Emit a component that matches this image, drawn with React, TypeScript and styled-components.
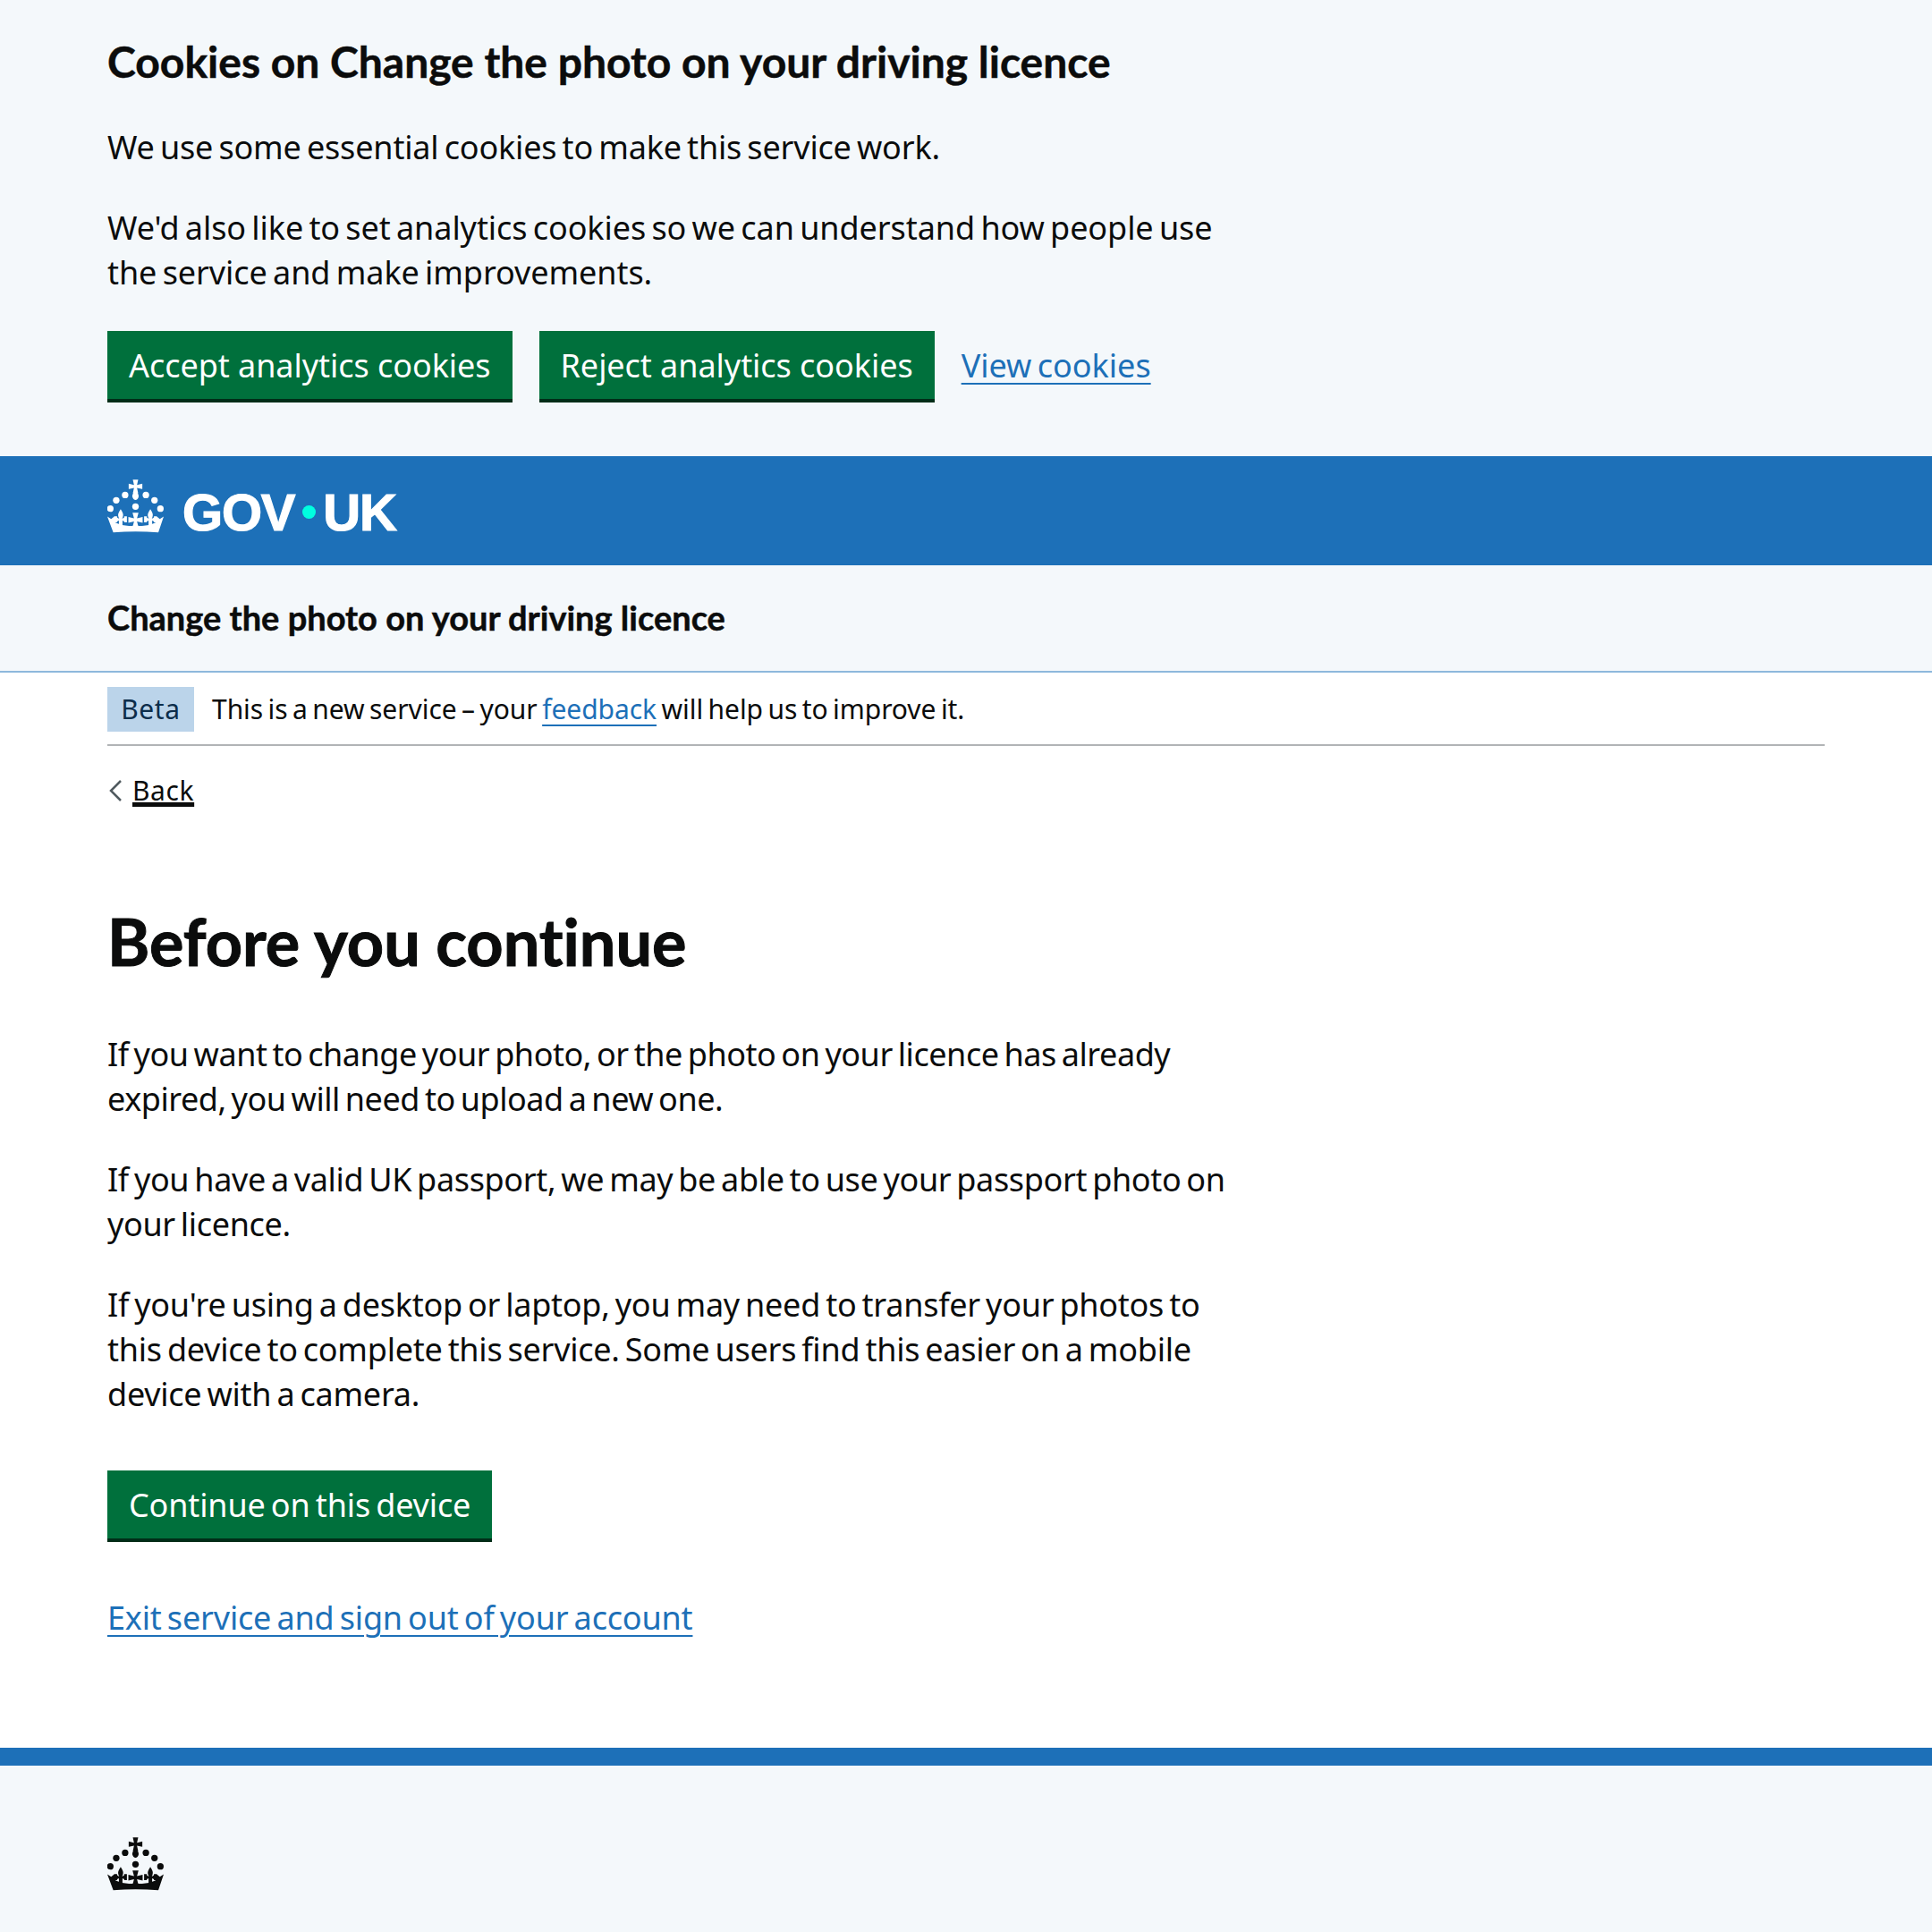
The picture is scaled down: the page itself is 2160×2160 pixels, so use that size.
import React from 'react';
import styled, { createGlobalStyle, css } from 'styled-components';

const GlobalStyle = createGlobalStyle`
  html, body {
    margin: 0;
    padding: 0;
    background: #fff;
    color: #0b0c0c;
    font-family: 'Noto Sans', sans-serif;
  }
  * { box-sizing: border-box; }
`;

// closest installed faces to the reference: tighter Noto for copy, Lato for headings
const bodyText = css`
  font-size: 36px;
  letter-spacing: -0.17px;
  word-spacing: -3px;
`;

const smallText = css`
  font-size: 30px;
  letter-spacing: -0.05px;
  word-spacing: -2.3px;
`;

const headingText = css`
  font-family: 'Lato', sans-serif;
  font-weight: 700;
  font-variant-ligatures: none;
  -webkit-text-stroke: 0.5px currentColor;
`;

const Page = styled.div`
  width: 2160px;
  height: 2160px;
  overflow: hidden;
  display: flex;
  flex-direction: column;
`;

const CookieBanner = styled.div`
  background: #f4f8fb;
  height: 510px;
  padding: 40px 120px 0;
`;

const CookieHeading = styled.h2`
  ${headingText}
  margin: 0 0 40px;
  font-size: 48px;
  line-height: 58px;
  padding-bottom: 2px;
`;

const Para = styled.p<{ $tracking?: number }>`
  ${bodyText}
  ${(p) => p.$tracking !== undefined && `letter-spacing: ${p.$tracking}px;`}
  margin: 0 0 40px;
  max-width: 1275px;
  line-height: 50px;
`;

const ButtonRow = styled.div`
  display: flex;
  align-items: center;
  gap: 30px;
`;

const GreenButton = styled.button`
  height: 76px;
  padding: 2px 24px 0;
  border: 0;
  background: #00703c;
  box-shadow: 0 4px 0 #002d18;
  color: #fff;
  font-family: inherit;
  font-size: 36px;
  letter-spacing: -0.05px;
  line-height: 38px;
`;

const ContinueButton = styled(GreenButton)`
  margin-top: 20px;
  letter-spacing: -0.15px;
  word-spacing: -3px;
`;

const Link = styled.a`
  ${bodyText}
  color: #1d70b8;
  line-height: 50px;
  text-decoration: underline;
  text-decoration-thickness: 2px;
  text-underline-offset: 6px;
`;

const ButtonLink = styled(Link)`
  padding-top: 2px;
  letter-spacing: 0;
`;

const Masthead = styled.header`
  background: #1d70b8;
  height: 122px;
  padding-left: 120px;
  display: flex;
  align-items: center;
  gap: 21px;
`;

const Wordmark = styled.div`
  display: flex;
  align-items: center;
  padding-top: 3px;
  color: #fff;
  font-family: 'Liberation Sans', sans-serif;
  font-size: 58px;
  line-height: 60px;
  font-weight: 700;
  letter-spacing: -1.2px;
  -webkit-text-stroke: 1.2px #fff;
`;

const WordmarkDot = styled.span`
  width: 15px;
  height: 15px;
  margin: 0 8px 0 9px;
  border-radius: 50%;
  background: #00ffe0;
`;

const ServiceBar = styled.div`
  ${headingText}
  background: #f4f8fb;
  height: 120px;
  padding: 0 0 2px 120px;
  border-bottom: 2px solid #8eb8dc;
  display: flex;
  align-items: center;
  font-size: 38px;
`;

const Main = styled.main`
  flex: 1;
  padding: 0 120px;
`;

const PhaseBanner = styled.div`
  ${smallText}
  display: flex;
  align-items: center;
  gap: 20px;
  height: 82px;
  padding: 16px 0 14px;
  border-bottom: 2px solid #b1b4b6;
  line-height: 40px;
`;

const PhaseTag = styled.strong`
  width: 97px;
  height: 50px;
  background: #bbd4ea;
  color: #0c2d4a;
  font-size: 30px;
  font-weight: 400;
  letter-spacing: 0.6px;
  line-height: 50px;
  text-align: center;
`;

const PhaseLink = styled(Link)`
  ${smallText}
  line-height: 40px;
`;

const BackLink = styled.a`
  display: flex;
  align-items: center;
  gap: 12px;
  margin-top: 30px;
  padding-left: 2px;
  height: 40px;
  color: #0b0c0c;
  font-size: 30px;
  letter-spacing: 0.6px;
  line-height: 40px;
`;

const BackText = styled.span`
  text-decoration: underline;
  text-decoration-thickness: 2px;
  text-underline-offset: 5px;
`;

const Title = styled.h1`
  ${headingText}
  margin: 108px 0 62px;
  font-size: 72px;
  line-height: 80px;
  -webkit-text-stroke: 1px currentColor;
`;

const ExitLink = styled.div`
  margin-top: 64px;
`;

const Footer = styled.footer`
  height: 206px;
  background: #f4f8fb;
  border-top: 20px solid #1d70b8;
  padding: 80px 120px 0;
`;

const CrownSvg = styled.svg<{ $raised?: boolean }>`
  display: block;
  flex: none;
  margin-top: ${(p) => (p.$raised ? '-10px' : '0')};
`;

const pattee = (cx: number, cy: number, l: number, end: number, mid: number) =>
  `M${cx - end} ${cy - l}H${cx + end}L${cx + mid} ${cy - mid}L${cx + l} ${cy - end}V${cy + end}L${cx + mid} ${cy + mid}L${cx + end} ${cy + l}H${cx - end}L${cx - mid} ${cy + mid}L${cx - l} ${cy + end}V${cy - end}L${cx - mid} ${cy - mid}Z`;

const fleur = (cx: number) =>
  `M${cx} 100C${cx + 6} 110 ${cx + 11} 117 ${cx + 7} 127L${cx + 5} 132L${cx + 12} 128V124H${cx + 21}V144H${cx + 12}V141L${cx + 6} 138V165H${cx - 6}V138L${cx - 12} 141V144H${cx - 21}V124H${cx - 12}V128L${cx - 5} 132L${cx - 7} 127C${cx - 11} 117 ${cx - 6} 110 ${cx} 100Z`;

const Crown = ({ color, raised }: { color: string; raised?: boolean }) => (
  <CrownSvg $raised={raised} width="63" height="60" viewBox="0 0 190 180" fill={color} aria-hidden="true">
    <path d={pattee(95, 23, 23, 9, 5)} />
    <path d="M95 34C101 43 108 52 105 60C103 66 99 69 95 69C91 69 87 66 85 60C82 52 89 43 95 34Z" />
    <circle cx="60" cy="52" r="11" />
    <circle cx="130" cy="52" r="11" />
    <circle cx="30" cy="70" r="11" />
    <circle cx="159" cy="70" r="11" />
    <circle cx="10" cy="98" r="11" />
    <circle cx="179" cy="98" r="11" />
    <circle cx="95" cy="91" r="11" />
    <path d="M0 125L13 133L25 123L28 146Q62 162 95 154Q128 162 162 146L165 123L177 133L190 125L172 178Q95 172 20 178Z" />
    <path d={fleur(45)} />
    <path d={fleur(145)} />
    <path d={pattee(95, 136, 24, 10, 5)} />
  </CrownSvg>
);

const BackChevron = () => (
  <svg width="14" height="24" viewBox="0 0 14 24" fill="none" stroke="#505a5f" strokeWidth="2.5" aria-hidden="true">
    <path d="M13 1L2 12l11 11" />
  </svg>
);

const App = () => {
  return (
    <Page>
      <GlobalStyle />
      <CookieBanner>
        <CookieHeading>Cookies on Change the photo on your driving licence</CookieHeading>
        <Para>We use some essential cookies to make this service work.</Para>
        <Para $tracking={-0.07}>
          We'd also like to set analytics cookies so we can understand how people use the service and
          make improvements.
        </Para>
        <ButtonRow>
          <GreenButton>Accept analytics cookies</GreenButton>
          <GreenButton>Reject analytics cookies</GreenButton>
          <ButtonLink href="#">View cookies</ButtonLink>
        </ButtonRow>
      </CookieBanner>
      <Masthead>
        <Crown color="#fff" raised />
        <Wordmark>
          GOV
          <WordmarkDot />
          UK
        </Wordmark>
      </Masthead>
      <ServiceBar>Change the photo on your driving licence</ServiceBar>
      <Main>
        <PhaseBanner>
          <PhaseTag>Beta</PhaseTag>
          <span>
            This is a new service – your <PhaseLink href="#">feedback</PhaseLink> will help us to improve it.
          </span>
        </PhaseBanner>
        <BackLink href="#">
          <BackChevron />
          <BackText>Back</BackText>
        </BackLink>
        <Title>Before you continue</Title>
        <Para $tracking={-0.45}>
          If you want to change your photo, or the photo on your licence has already expired, you will
          need to upload a new one.
        </Para>
        <Para $tracking={-0.35}>
          If you have a valid UK passport, we may be able to use your passport photo on your licence.
        </Para>
        <Para $tracking={-0.25}>
          If you're using a desktop or laptop, you may need to transfer your photos to this device to
          complete this service. Some users find this easier on a mobile device with a camera.
        </Para>
        <ContinueButton>Continue on this device</ContinueButton>
        <ExitLink>
          <Link href="#">Exit service and sign out of your account</Link>
        </ExitLink>
      </Main>
      <Footer>
        <Crown color="#0b0c0c" />
      </Footer>
    </Page>
  );
};

export default App;
